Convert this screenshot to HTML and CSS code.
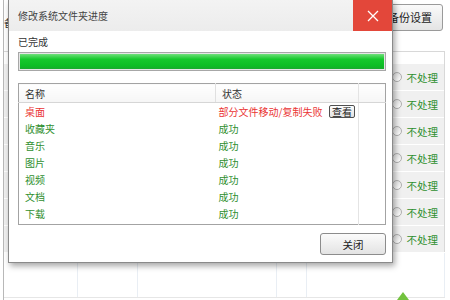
FILE: index.html
```html
<!DOCTYPE html>
<html lang="zh-CN">
<head>
  <meta charset="UTF-8" />
  <meta name="viewport" content="width=device-width, initial-scale=1.0" />
  <title>修改系统文件夹进度</title>
  <link rel="stylesheet" href="styles.css">
</head>
<body>
  <div class="page">
    <div class="toolbar">
      <span class="toolbar-label">备</span>
      <button class="btn-backup">备份设置</button>
    </div>

    <div class="folder-list">
      <div class="folder-row"><span class="radio"></span><span class="opt">不处理</span></div>
      <div class="folder-row"><span class="radio"></span><span class="opt">不处理</span></div>
      <div class="folder-row"><span class="radio"></span><span class="opt">不处理</span></div>
      <div class="folder-row"><span class="radio"></span><span class="opt">不处理</span></div>
      <div class="folder-row"><span class="radio"></span><span class="opt">不处理</span></div>
      <div class="folder-row"><span class="radio"></span><span class="opt">不处理</span></div>
      <div class="folder-row"><span class="radio"></span><span class="opt">不处理</span></div>
    </div>
    <div class="list-foot">
      <div></div><div></div><div></div><div></div><div></div>
    </div>

    <svg class="arrow" width="12" height="8" viewBox="0 0 12 8">
      <polygon points="6,0 12,8 0,8" fill="#72c23e" />
    </svg>
  </div>

  <!-- progress dialog -->
  <div class="dialog">
    <div class="dialog-title">
      <span>修改系统文件夹进度</span>
      <span class="dialog-close">
        <svg width="12" height="12" viewBox="0 0 12 12">
          <path d="M1 1 L11 11 M11 1 L1 11" stroke="#fff" stroke-width="1.3" fill="none" />
        </svg>
      </span>
    </div>
    <div class="dialog-body">
      <div class="status-text">已完成</div>
      <div class="progress"><div class="progress-fill"></div></div>

      <table class="result">
        <thead>
          <tr>
            <th class="col-name">名称</th>
            <th class="col-state">状态</th>
            <th class="col-pad"></th>
          </tr>
        </thead>
        <tbody>
          <tr class="fail">
            <td>桌面</td>
            <td class="col-state"><span class="state-cell">部分文件移动/复制失败<button class="btn-view">查看</button></span></td>
            <td></td>
          </tr>
          <tr><td>收藏夹</td><td class="col-state">成功</td><td></td></tr>
          <tr><td>音乐</td><td class="col-state">成功</td><td></td></tr>
          <tr><td>图片</td><td class="col-state">成功</td><td></td></tr>
          <tr><td>视频</td><td class="col-state">成功</td><td></td></tr>
          <tr><td>文档</td><td class="col-state">成功</td><td></td></tr>
          <tr><td>下载</td><td class="col-state">成功</td><td></td></tr>
          <tr class="filler"><td></td><td class="col-state"></td><td></td></tr>
        </tbody>
      </table>

      <div class="dialog-actions">
        <button class="btn-close">关闭</button>
      </div>
    </div>
  </div>
</body>
</html>
```

FILE: styles.css
```css
body {
  margin: 0;
  font-family: "Noto Sans CJK SC", "Noto Sans", sans-serif;
  font-size: 10px;
  color: #333;
  background-color: #fff;
  width: 450px;
  height: 300px;
  overflow: hidden;
}

/* background window */
.page {
  position: relative;
  height: 300px;
  margin-left: 3px;
  border-left: 1px solid #b8b8b8;
}

.toolbar {
  display: flex;
  justify-content: space-between;
  align-items: center;
  height: 52px;
  padding-right: 2px;
  border-bottom: 1px solid #d8d8d8;
  width: 441px;
  box-sizing: border-box;
}

.toolbar-label {
  font-size: 10px;
  color: #333;
  margin-top: -6px;
}

.btn-backup {
  width: 58px;
  height: 27px;
  margin-top: -17px;
  font-family: inherit;
  font-size: 11px;
  color: #222;
  border: 1px solid #9a9a9a;
  border-radius: 3px;
  background: linear-gradient(#fafafa, #e4e4e4);
  padding: 0 0 0 2px;
  text-align: left;
}

.folder-list {
  width: 440px;
  padding-top: 12px;
  border-right: 1px solid #d8d8d8;
}

.folder-row {
  display: flex;
  justify-content: flex-end;
  align-items: center;
  gap: 5px;
  height: 26px;
  margin-bottom: 1px;
  padding-right: 6px;
  background-color: #f0f0f0;
}

.radio {
  width: 8px;
  height: 8px;
  border: 1px solid #b0b0b0;
  border-radius: 50%;
  background: linear-gradient(#e6e6e6, #fff);
}

.opt {
  color: #2f8f2f;
  font-size: 10.5px;
}

.list-foot {
  display: grid;
  grid-template-columns: 74px 60px 139px 30px 1fr;
  width: 441px;
  height: 44px;
  border-bottom: 1px solid #e6e6e6;
}

.list-foot div {
  border-right: 1px solid #e9eef4;
}

.arrow {
  position: absolute;
  left: 393px;
  top: 292px;
}

/* progress dialog */
.dialog {
  position: absolute;
  left: 8px;
  top: 0;
  width: 385px;
  height: 263px;
  box-sizing: border-box;
  border: 1px solid #8a8a8a;
  border-top: none;
  background-color: #fff;
  box-shadow: 2px 3px 6px rgba(0, 0, 0, 0.35);
}

.dialog-title {
  display: flex;
  justify-content: space-between;
  align-items: center;
  height: 31px;
  padding-left: 9px;
  color: #444;
  background: linear-gradient(#f3f3f3, #ececec);
}

.dialog-close {
  display: flex;
  justify-content: center;
  align-items: center;
  width: 39px;
  height: 31px;
  background-color: #e3473a;
}

.dialog-body {
  padding: 4px 6px 0 9px;
}

.status-text {
  line-height: 14px;
  color: #333;
}

.progress {
  margin-top: 3px;
  height: 19px;
  box-sizing: border-box;
  border: 1px solid #a7a7a7;
  background-color: #e6e6e6;
  padding: 1px;
}

.progress-fill {
  height: 100%;
  background: linear-gradient(#6fe07a, #16c82c 35%, #0cbd24 80%, #1aa92e);
}

.result {
  margin-top: 12px;
  width: 368px;
  border-collapse: collapse;
  border: 1px solid #a3a3a3;
  table-layout: fixed;
}

.result th {
  height: 18px;
  padding: 0 0 0 6px;
  text-align: left;
  font-weight: normal;
  color: #333;
  border-bottom: 1px solid #d6d6d6;
  background: linear-gradient(#fff, #f6f6f6);
}

.result th.col-name {
  width: 190px;
  border-right: 1px solid #e0e0e0;
}

.result th.col-pad {
  width: 26px;
  padding: 0;
}

.result td {
  height: 17px;
  padding: 0 0 0 6px;
  color: #2f8f2f;
  white-space: nowrap;
}

.result td.col-state {
  padding-left: 3px;
  border-right: 1px solid #e4e4e4;
}

.result th.col-state {
  padding-left: 6px;
  border-right: 1px solid #e4e4e4;
}

.result tr.fail td {
  color: #ea3434;
}

.result tr.filler td {
  height: 2px;
}

.state-cell {
  display: flex;
  justify-content: space-between;
  align-items: center;
  padding-right: 3px;
}

.btn-view {
  height: 13px;
  padding: 0 2px;
  font-family: inherit;
  font-size: 10px;
  line-height: 11px;
  color: #222;
  border: 1px solid #505050;
  border-radius: 2px;
  background: linear-gradient(#fdfdfd, #e2e2e2);
}

.dialog-actions {
  display: flex;
  justify-content: flex-end;
  margin-top: 8px;
}

.btn-close {
  width: 66px;
  height: 22px;
  font-family: inherit;
  font-size: 10.5px;
  color: #222;
  border: 1px solid #8c8c8c;
  border-radius: 3px;
  background: linear-gradient(#fbfbfb, #e3e3e3);
  margin-right: 0;
}
```
